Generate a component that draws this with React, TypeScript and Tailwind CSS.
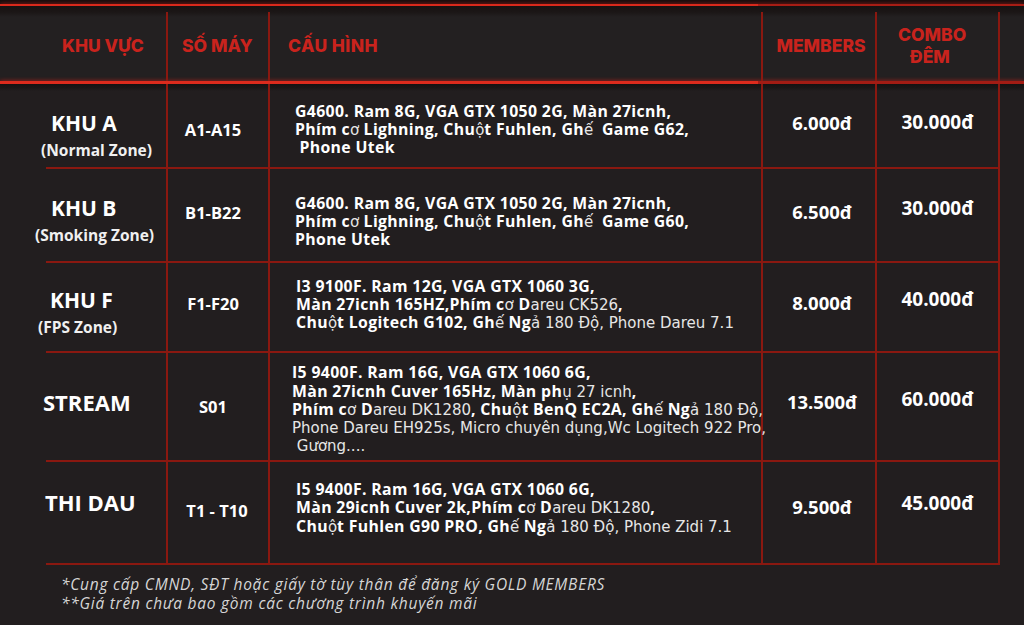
import React from 'react';

type Seg = [string, 0 | 1];

interface Zone {
  title: string;
  sub?: string;
  titleCls: string;
  subCls?: string;
  rowCls: string;
  pad: string;
  machines: string;
  machCls: string;
  cfg: Seg[][];
  cfgCls: string;
  member: string;
  memCls: string;
  combo: string;
  comboCls: string;
}

const zones: Zone[] = [
  {
    title: 'KHU A',
    sub: '(Normal Zone)',
    titleCls: 'pl-[51px]',
    subCls: 'pl-[41px]',
    rowCls: 'h-[85px]',
    pad: 'pt-[26px]',
    machines: 'A1-A15',
    machCls: 'pt-[10px]',
    cfg: [
      [['G4600. Ram 8G, VGA GTX 1050 2G, Màn 27icnh,', 1]],
      [['Phím c', 1], ['ơ', 0], [' Lighning, Chu', 1], ['ộ', 0], ['t Fuhlen, Gh', 1], ['ế', 0], ['  Game G62,', 1]],
      [['\u00a0Phone Utek', 1]],
    ],
    cfgCls: 'pl-[25px] pt-[7px]',
    member: '6.000đ',
    memCls: 'pb-[6px]',
    combo: '30.000đ',
    comboCls: 'pb-[6px]',
  },
  {
    title: 'KHU B',
    sub: '(Smoking Zone)',
    titleCls: 'pl-[51px]',
    subCls: 'pl-[35px]',
    rowCls: 'h-[94px]',
    pad: 'pt-[26px]',
    machines: 'B1-B22',
    machCls: 'pb-[3px]',
    cfg: [
      [['G4600. Ram 8G, VGA GTX 1050 2G, Màn 27icnh,', 1]],
      [['Phím c', 1], ['ơ', 0], [' Lighning, Chu', 1], ['ộ', 0], ['t Fuhlen, Gh', 1], ['ế', 0], ['  Game G60,', 1]],
      [['Phone Utek', 1]],
    ],
    cfgCls: 'pl-[25px] pt-[12px]',
    member: '6.500đ',
    memCls: 'pb-[6px]',
    combo: '30.000đ',
    comboCls: 'pb-[14px]',
  },
  {
    title: 'KHU F',
    sub: '(FPS Zone)',
    titleCls: 'pl-[50px]',
    subCls: 'pl-[38px]',
    rowCls: 'h-[90px]',
    pad: 'pt-[24px]',
    machines: 'F1-F20',
    machCls: 'pb-[6px]',
    cfg: [
      [['I3 9100F. Ram 12G, VGA GTX 1060 3G,', 1]],
      [['Màn 27icnh 165HZ,Phím c', 1], ['ơ ', 0], ['D', 1], ['areu CK526', 0], [',', 1]],
      [['Chu', 1], ['ộ', 0], ['t Logitech G102, Gh', 1], ['ế', 0], [' Ng', 1], ['ả 180 Độ, Phone Dareu 7.1', 0]],
    ],
    cfgCls: 'pl-[26px] pb-[6px]',
    member: '8.000đ',
    memCls: 'pb-[8px]',
    combo: '40.000đ',
    comboCls: 'pb-[16px]',
  },
  {
    title: 'STREAM',
    titleCls: 'pl-[43px] text-[22px]',
    rowCls: 'h-[109px]',
    pad: 'pt-[36px]',
    machines: 'S01',
    machCls: 'pt-[2px]',
    cfg: [
      [['I5 9400F. Ram 16G, VGA GTX 1060 6G,', 1]],
      [['Màn 27icnh Cuver 165Hz, Màn ph', 1], ['ụ 27 icnh', 0], [',', 1]],
      [['Phím c', 1], ['ơ ', 0], ['D', 1], ['areu DK1280', 0], [', Chu', 1], ['ộ', 0], ['t BenQ EC2A, Gh', 1], ['ế', 0], [' Ng', 1], ['ả 180 Độ,', 0]],
      [['Phone Dareu EH925s, Micro chuyên dụng,Wc Logitech 922 Pro,', 0]],
      [['\u00a0Gương....', 0]],
    ],
    cfgCls: 'pl-[22px] pt-[5px]',
    member: '13.500đ',
    memCls: 'pb-[10px]',
    combo: '60.000đ',
    comboCls: 'pb-[14px]',
  },
  {
    title: 'THI DAU',
    titleCls: 'pl-[45px] text-[22px]',
    rowCls: 'h-[103px]',
    pad: 'pt-[27px]',
    machines: 'T1 - T10',
    machCls: 'pb-[3px] pl-[8px]',
    cfg: [
      [['I5 9400F. Ram 16G, VGA GTX 1060 6G,', 1]],
      [['Màn 29icnh Cuver 2k,Phím c', 1], ['ơ ', 0], ['D', 1], ['areu DK1280', 0], [',', 1]],
      [['Chu', 1], ['ộ', 0], ['t Fuhlen G90 PRO, Gh', 1], ['ế', 0], [' Ng', 1], ['ả 180 Độ, Phone Zidi 7.1', 0]],
    ],
    cfgCls: 'pl-[26px] pb-[10px]',
    member: '9.500đ',
    memCls: 'pb-[12px]',
    combo: '45.000đ',
    comboCls: 'pb-[18px]',
  },
];

const cols = 'grid grid-cols-[168px_102px_493px_114px_123px_24px]';
const line = 'border-[#8a1810]';

const CfgLine: React.FC<{ segs: Seg[] }> = ({ segs }) => (
  <div className="whitespace-pre h-[18.3px]">
    {segs.map(([t, b], i) =>
      b ? (
        <span key={i} className="inline-block font-bold tracking-[0.35px]">{t}</span>
      ) : (
        <span key={i} className="inline-block font-['DejaVu_Sans',sans-serif] font-normal text-[15px] text-[#e6e6e6]">{t}</span>
      )
    )}
  </div>
);

const ZoneRow: React.FC<{ z: Zone }> = ({ z }) => (
  <div className={`${cols} ${z.rowCls}`}>
    <div className={`flex flex-col border-r-2 ${line}`}>
      <div className={`flex-1 flex flex-col ${z.pad}`}>
        <div className={`font-bold text-[21px] leading-[26px] text-white ${z.titleCls}`}>{z.title}</div>
        {z.sub && (
          <div className={`font-bold text-[15.5px] leading-[20px] mt-[4px] text-[#f0f0f0] ${z.subCls}`}>{z.sub}</div>
        )}
      </div>
      <div className="ml-[46px] h-[2px] bg-[#8a1810]" />
    </div>
    <div className={`flex items-center justify-center border-r-2 border-b-2 ${line} font-bold text-[16.5px] text-white pr-[10px] ${z.machCls}`}>
      {z.machines}
    </div>
    <div className={`flex flex-col justify-center border-r-2 border-b-2 ${line} text-[15.8px] leading-[18.3px] text-white ${z.cfgCls}`}>
      {z.cfg.map((segs, i) => (
        <CfgLine key={i} segs={segs} />
      ))}
    </div>
    <div className={`flex items-center justify-center border-r-2 border-b-2 ${line} font-bold text-[18.5px] text-white pl-[6px] ${z.memCls}`}>
      {z.member}
    </div>
    <div className={`flex items-center justify-center border-r-2 border-b-2 ${line} font-bold text-[19px] text-white ${z.comboCls}`}>
      {z.combo}
    </div>
    <div />
  </div>
);

const App: React.FC = () => {
  return (
    <div className="w-[1024px] h-[625px] overflow-hidden bg-[#221e1f] font-['Open_Sans',sans-serif]">
      <div className="h-[4px] bg-[#130d0d]" />
      <div className="h-[2px] bg-[linear-gradient(to_right,#d9291c_0,#d9291c_74%,#a81d15_74%,#a81d15_100%)] shadow-[0_0_4px_#c0221a]" />
      <div className={`${cols} h-[75px] pt-[6px] bg-[linear-gradient(to_bottom,#171212_0,#1b1616_6px,#232021_11px,#232021_100%)] font-['Inter',sans-serif] font-extrabold text-[17.5px] text-[#c9231d]`}>
        <div className={`flex items-center border-r-2 ${line} pl-[62px]`}>KHU VỰC</div>
        <div className={`flex items-center border-r-2 ${line} pl-[14px]`}>SỐ MÁY</div>
        <div className={`flex items-center border-r-2 ${line} pl-[18px] tracking-[0.4px]`}>CẤU HÌNH</div>
        <div className={`flex items-center justify-center border-r-2 ${line} pl-[4px]`}>MEMBERS</div>
        <div className={`flex flex-col justify-center border-r-2 ${line} pl-[21px] pb-[2px] leading-[22px]`}>
          <span>COMBO</span>
          <span className="pl-[12px]">ĐÊM</span>
        </div>
        <div />
      </div>
      <div className="h-[3px] bg-[linear-gradient(to_right,#dc2b1d_0,#dc2b1d_74%,#a31c14_74%,#a31c14_100%)] shadow-[0_0_4px_#b8201a]" />
      <div className="bg-[linear-gradient(to_bottom,#161212_0,#1b1717_4px,#221e1f_7px,#221e1f_100%)]">
        {zones.map(z => (
          <ZoneRow key={z.title} z={z} />
        ))}
      </div>
      <div className="pt-[10px] pl-[61px] italic text-[15.5px] tracking-[0.75px] leading-[19px] text-[#d6d6d6]">
        <div>*Cung cấp CMND, SĐT hoặc giấy tờ tùy thân để đăng ký GOLD MEMBERS</div>
        <div>**Giá trên chưa bao gồm các chương trình khuyến mãi</div>
      </div>
    </div>
  );
};

export default App;
